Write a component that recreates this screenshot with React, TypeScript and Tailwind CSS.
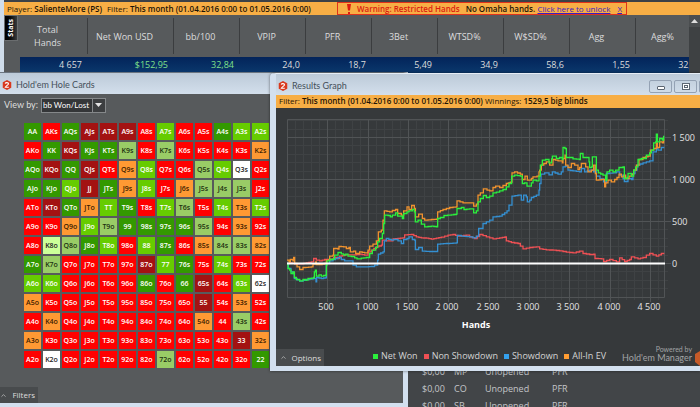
import { ChevronUp } from 'lucide-react'
import clsx from 'clsx'

const stats = [
  { label: 'Total Hands', value: '4 657', width: 'w-[68px]' },
  { label: 'Net Won USD', value: '$152,95', width: 'w-[86px]', positive: true },
  { label: 'bb/100', value: '32,84', width: 'w-[66px]', positive: true },
  { label: 'VPIP', value: '24,0', width: 'w-[66px]' },
  { label: 'PFR', value: '18,7', width: 'w-[66px]' },
  { label: '3Bet', value: '5,49', width: 'w-[66px]' },
  { label: 'WTSD%', value: '34,9', width: 'w-[66px]' },
  { label: 'W$SD%', value: '58,6', width: 'w-[66px]' },
  { label: 'Agg', value: '1,55', width: 'w-[66px]' },
  { label: 'Agg%', value: '32,1', width: 'w-[66px]' },
]

const ranks = 'AKQJT98765432'

// One letter per hand, see cellColors
const heat = [
  'GRGDDDRLRRGLL',
  'RGDGGPRPRRRRO',
  'GDGDROLRRPLWR',
  'GGLDGOLROPPPR',
  'RDGOLGRLPRLOL',
  'RROLPGGGGPROR',
  'RYPGLRLGROPPO',
  'GPRRRRDLGRLRR',
  'LLRRRRGRGDRLW',
  'ORRRRRRRRDROR',
  'RORRRRRRRORPR',
  'ORRRRRRRRRRDO',
  'RWRRRRRPRRRRG',
]

const cellColors: Record<string, string> = {
  R: 'bg-[#ff0000] text-white',
  G: 'bg-[#339900] text-white',
  L: 'bg-[#66cc00] text-white',
  P: 'bg-[#99cc66] text-[#1c3010]',
  O: 'bg-[#ff9933] text-[#3c2000]',
  D: 'bg-[#a31212] text-white',
  W: 'bg-white text-[#222]',
  Y: 'bg-[#ccff99] text-[#222]',
}

function handName(row: number, col: number) {
  if (row === col) return ranks[row] + ranks[row]
  return row < col ? `${ranks[row]}${ranks[col]}s` : `${ranks[col]}${ranks[row]}o`
}

// "x,v" pairs: x and v both count thirds of a pixel from the start of the zero line
const series = [
  {
    name: 'Non Showdown',
    color: '#ef5054',
    swatch: 'bg-[#ef5054]',
    data: '0,0 8,2 23,-1 43,-1 58,2 73,5 80,15 88,10 98,8 113,12 128,13 140,18 153,15 158,22 173,26 198,26 218,28 233,25 243,35 253,40 268,50 283,55 286,70 298,68 313,68 318,74 333,75 348,77 353,86 373,87 388,80 403,77 418,76 433,73 448,76 463,79 483,85 498,87 513,82 538,85 548,80 563,75 578,87 598,80 618,74 638,77 654,80 658,68 673,63 693,60 700,52 708,44 728,48 748,50 758,44 778,41 798,40 818,38 838,34 858,32 878,37 888,30 908,27 920,28 924,15 943,14 950,6 968,12 988,5 998,17 1013,6 1028,12 1033,20 1053,14 1068,18 1078,25 1088,30 1108,22 1123,30 1130,32',
  },
  {
    name: 'Showdown',
    color: '#3490d2',
    swatch: 'bg-[#34a0ec]',
    data: '0,0 4,-15 12,-25 18,-30 22,-45 38,-53 58,-48 78,-45 85,-45 87,-55 89,-42 103,-45 117,-42 118,0 128,8 138,12 153,18 163,12 173,8 188,8 198,-5 208,-10 238,-10 253,-9 263,-5 272,10 274,28 288,35 292,68 298,75 313,70 320,72 333,68 343,60 350,72 360,75 366,80 376,72 383,70 385,42 395,48 406,37 428,36 448,36 452,58 478,60 508,62 511,84 523,82 548,80 558,77 568,82 575,105 588,120 608,130 618,140 638,142 653,152 660,158 666,175 675,202 693,205 703,190 710,205 718,200 721,185 728,190 733,198 748,205 756,220 758,240 762,268 773,272 786,266 796,275 813,268 823,275 828,290 835,292 843,280 858,278 878,275 883,285 893,275 908,280 920,275 924,290 928,262 950,245 954,242 958,270 978,272 988,275 1008,255 1012,246 1023,255 1034,252 1038,270 1044,280 1050,295 1068,302 1088,308 1098,335 1108,345 1113,340 1123,348 1130,350',
  },
  {
    name: 'All-In EV',
    color: '#f0922e',
    swatch: 'bg-[#ff9c32]',
    data: '0,10 6,5 10,12 18,8 20,18 23,0 30,-10 38,-18 48,-12 73,-10 78,-2 86,5 88,-3 98,-3 113,0 118,10 128,22 138,25 140,45 153,43 156,51 170,50 178,45 186,48 190,35 200,37 206,30 218,35 233,32 243,40 248,52 258,58 268,68 274,95 283,100 288,130 292,158 308,155 316,159 326,162 332,150 343,145 350,158 360,170 366,162 374,174 382,165 385,140 395,148 406,135 413,130 433,132 448,133 452,155 468,162 488,168 508,170 510,188 528,182 548,182 560,172 568,178 573,205 580,212 589,224 600,220 608,218 618,228 626,232 638,228 648,234 658,240 664,242 670,244 675,272 683,275 700,268 706,252 714,262 721,250 733,255 738,260 750,262 756,275 758,280 763,295 778,305 788,295 798,312 813,308 826,302 828,315 834,325 836,295 843,288 853,300 863,295 873,282 878,288 883,300 896,290 903,275 913,280 920,295 925,270 928,250 943,252 953,230 956,242 963,250 973,245 983,252 990,258 996,268 1003,260 1010,265 1016,255 1026,262 1034,268 1040,280 1048,295 1056,312 1068,318 1083,322 1090,340 1100,345 1108,362 1111,348 1118,365 1126,362 1130,372',
  },
  {
    name: 'Net Won',
    color: '#2bf03c',
    swatch: 'bg-[#2bf03c]',
    data: '0,0 3,-15 8,-20 12,-30 18,-25 22,-42 28,-48 38,-52 48,-48 56,-50 63,-45 73,-44 80,-42 82,-25 85,-20 88,-38 96,-34 103,-38 110,-36 117,-34 118,-5 120,8 128,12 138,14 143,25 153,33 163,29 170,25 176,28 183,22 193,21 203,17 210,14 223,16 238,18 248,30 256,40 266,48 272,65 278,75 286,90 290,120 293,145 303,144 310,140 316,145 326,152 332,142 340,142 346,135 350,150 360,155 366,158 376,162 382,155 385,125 393,130 403,118 413,110 433,112 448,110 452,135 460,138 471,144 493,146 508,148 510,165 523,168 531,162 548,164 560,152 568,158 573,185 580,195 589,204 598,198 608,202 618,212 628,214 638,218 648,222 658,230 666,240 674,262 683,265 700,262 706,240 713,242 720,232 733,242 738,250 748,248 756,262 760,295 766,310 776,312 786,302 794,314 796,322 808,315 818,318 826,312 828,348 834,345 838,318 848,318 858,314 878,312 880,330 888,318 898,318 906,305 908,288 914,290 916,320 924,320 928,280 934,272 948,265 956,250 960,275 968,280 978,275 986,280 996,288 1008,290 1012,255 1020,258 1023,270 1033,262 1040,280 1046,290 1053,312 1063,315 1073,315 1078,325 1088,332 1093,340 1100,362 1106,365 1108,388 1111,365 1118,375 1126,370 1130,383',
  },
]

const legend = [series[3], series[0], series[1], series[2]]

// Plot area inside the 424 x 230 drawing
const plot = { left: 11, right: 389, top: 12, bottom: 189, zero: 155 }

// Stair line; long runs are cut into shorter steps so they do not turn into blocks
function stepPath(data: string) {
  const points = data.split(' ').map((pair) => pair.split(',').map(Number))
  let d = ''
  points.forEach(([px, pv], i) => {
    const [lastX, lastV] = points[Math.max(i - 1, 0)]
    const steps = Math.max(1, Math.round((px - lastX) / 9))
    for (let s = 1; s <= steps; s++) {
      const x = plot.left + (lastX + ((px - lastX) * s) / steps) / 3
      const y = plot.zero + 0.5 - (lastV + ((pv - lastV) * s) / steps) / 3
      d += d === '' ? `M${x} ${y}` : `H${x}V${y}`
    }
  })
  return d
}

function Logo() {
  return (
    <svg className="size-[10px] shrink-0" viewBox="0 0 20 20" aria-hidden="true">
      <path d="M10 0l8.5 4.5v11L10 20l-8.5-4.5v-11z" fill="#d9381e" />
      <path
        d="M6.5 7.2C7 4.6 13 4.4 13 7.600c0 2.400-4.500 3.600-6.200 6.800H13.600"
        fill="none"
        stroke="#fff"
        strokeWidth="2.200"
      />
    </svg>
  )
}

function TitleBar({ title, children }: { title: string; children?: React.ReactNode }) {
  return (
    <header className="flex h-[21px] items-center gap-1 bg-linear-to-b from-[#bccad8] to-[#d3dfec] pt-[3px] pl-[2px] font-['Lato','Open_Sans',sans-serif] text-[9px] text-[#45505a]">
      <Logo />
      <h2 className="grow">{title}</h2>
      {children}
    </header>
  )
}

function StatsWindow() {
  return (
    <section className="absolute inset-x-0 top-0 h-[73px] overflow-hidden border-l-4 border-[#cfdcea] bg-[#575a5c]">
      <div className="flex h-[15px] items-center border-t-2 border-[#3c4146] bg-[#f7ae45] pl-[3px] text-[8px] whitespace-nowrap text-[#1d1405]">
        <p className="w-[330px] shrink-0">
          Player: <b className="font-semibold">SalienteMore (PS)</b>
          <span className="ml-[5px]">Filter:</span>{' '}
          <b className="font-semibold">This month (01.04.2016 0:00 to 01.05.2016 0:00)</b>
        </p>
        <div className="flex h-[13px] w-[290px] shrink-0 items-center border border-[#e0321a] px-1 pl-[9px]">
          <svg className="mr-[6px] h-[10px] w-1" viewBox="0 0 4 10" aria-hidden="true">
            <path d="M0 0h4L3 6.500H1zM1 8h2v2H1z" fill="#dc1c10" />
          </svg>
          <b className="font-semibold text-[#dc1c10]">Warning: Restricted Hands</b>
          <b className="ml-[6px] font-semibold">No Omaha hands.</b>
          <a href="#unlock" className="ml-auto text-[#3a1cc4] underline">
            Click here to unlock
          </a>
          <a href="#close" className="ml-[7px] text-[#3a1cc4] underline">
            X
          </a>
        </div>
      </div>
      <div className="flex">
        <button className="mr-[2px] flex h-[26px] w-[14px] shrink-0 items-center justify-center border border-[#6a6d6f] bg-linear-to-r from-black to-[#3a3c3e] text-[7px] font-bold text-white">
          <span className="rotate-180 [writing-mode:vertical-rl]">Stats</span>
        </button>
        <div className="min-w-0 grow overflow-hidden">
          <table className="w-[682px] table-fixed border-collapse text-[9px] text-[#dcdcdc]">
            <thead>
              <tr>
                {stats.map((stat) => (
                  <th key={stat.label} className={clsx('h-[42px] p-0 font-normal', stat.width)}>
                    <div className="flex h-9 items-center justify-center border-r border-[#3b3d3f] pr-3 leading-[13px]">
                      <span className={clsx(stat.label === 'Total Hands' && 'w-7')}>{stat.label}</span>
                    </div>
                  </th>
                ))}
              </tr>
            </thead>
            <tbody>
              <tr className="h-[16px] bg-linear-to-b from-[#04245a] to-[#0b386c]">
                {stats.map((stat) => (
                  <td
                    key={stat.label}
                    className={clsx('p-0 pr-[6px] text-right leading-3', stat.positive && 'text-[#7fe08a]')}
                  >
                    {stat.value}
                  </td>
                ))}
              </tr>
            </tbody>
          </table>
        </div>
        <div className="w-[11px] shrink-0 bg-[#3e4143]">
          <button aria-label="Scroll up" className="flex h-3 w-full items-center justify-center bg-[#4b4e50]">
            <svg className="h-1 w-[7px]" viewBox="0 0 7 4">
              <path d="M3.500 0L7 4H0z" fill="#ddd" />
            </svg>
          </button>
        </div>
      </div>
    </section>
  )
}

function PositionsWindow() {
  return (
    <section className="absolute right-0 bottom-0 left-[408px] h-[37px] overflow-hidden bg-[#424548]">
      <table className="-mt-[7px] w-full border-collapse text-[9px] text-[#c4c6c8]">
        <tbody>
          {['MP', 'CO', 'SB'].map((position) => (
            <tr key={position} className="h-[17px]">
              <td className="w-[46px] p-0 pl-[14px]">$0,00</td>
              <td className="w-[31px] p-0">{position}</td>
              <td className="w-[67px] p-0">Unopened</td>
              <td className="p-0">PFR</td>
            </tr>
          ))}
        </tbody>
      </table>
    </section>
  )
}

function HoleCardsWindow() {
  return (
    <section className="absolute top-[72px] bottom-0 left-0 flex w-[408px] flex-col border-t border-r-[5px] border-b-4 border-t-[#6b7580] border-r-[#d3e0ef] border-b-[#d3e0ef] bg-[#575a5c]">
      <TitleBar title="Hold'em Hole Cards" />
      <div className="mb-[5px] flex h-[22px] items-center gap-[3px] pl-1 font-['Lato','Open_Sans',sans-serif] text-[9px] text-[#dedede]">
        <label htmlFor="view-by">View by:</label>
        <div className="relative">
          <select
            id="view-by"
            className="block h-[15px] w-[65px] appearance-none border border-[#85888a] bg-[#343638] pl-px text-[8px] leading-3 text-white"
          >
            <option>bb Won/Lost</option>
          </select>
          <span className="pointer-events-none absolute inset-y-px right-px flex w-[13px] items-center justify-center border-l border-[#85888a] bg-[#3c3e40]">
            <svg className="h-1 w-[7px]" viewBox="0 0 7 4">
              <path d="M0 0h7L3.500 4z" fill="#e4e4e4" />
            </svg>
          </span>
        </div>
      </div>
      <table className="ml-[22px] table-fixed border-separate border-spacing-[2px] self-start text-[7px] leading-none font-semibold">
        <tbody>
          {heat.map((line, row) => (
            <tr key={line + row}>
              {line.split('').map((code, col) => (
                <td
                  key={col}
                  className={clsx('h-[17px] w-[17px] max-w-[17px] p-0 text-center whitespace-nowrap', cellColors[code])}
                >
                  {handName(row, col)}
                </td>
              ))}
            </tr>
          ))}
        </tbody>
      </table>
      <button className="mt-auto flex h-4 w-[38px] items-center justify-between bg-[#484b4d] pr-[3px] text-[8px] text-[#dedede]">
        <ChevronUp size={7} />
        Filters
      </button>
    </section>
  )
}

function ResultsChart() {
  const xTicks = [500, 1000, 1500, 2000, 2500, 3000, 3500, 4000, 4500]
  const yTicks = [0, 500, 1000, 1500]
  const format = (n: number) => String(n).replace(/(\d)(\d{3})$/, '$1 $2')

  return (
    <svg className="h-[230px] w-[424px] shrink-0" viewBox="0 0 424 230" role="img" aria-label="Results graph">
      <g stroke="#3f4244">
        {Array.from({ length: 46 }, (_, i) => {
          const x = plot.left + Math.round((i + 1) * 8.07) + 0.5
          return <path key={i} d={`M${x} ${plot.top}V${plot.bottom + 3}`} />
        })}
        {Array.from({ length: 21 }, (_, i) => {
          const y = plot.zero + 0.5 - Math.round((i - 3) * 8.4)
          return <path key={i} d={`M${plot.left} ${y}H${plot.right + 3}`} />
        })}
      </g>
      <g stroke="#515456">
        {xTicks.map((tick) => {
          const x = plot.left + Math.round(tick * 0.0807) + 0.5
          return <path key={tick} d={`M${x} ${plot.top}V${plot.bottom + 5}`} />
        })}
        {yTicks.map((tick) => {
          const y = plot.zero + 0.5 - Math.round(tick * 0.084)
          return <path key={tick} d={`M${plot.left} ${y}H${plot.right + 6}`} />
        })}
        <path d={`M${plot.left + 0.5} ${plot.top - 0.5}H${plot.right - 0.5}V${plot.bottom + 0.5}H${plot.left + 0.5}z`} fill="none" />
      </g>
      {series.map((line) => (
        <path key={line.name} d={stepPath(line.data)} fill="none" stroke={line.color} strokeWidth="1.300" />
      ))}
      <path d={`M${plot.left} ${plot.zero + 0.5}H${plot.right}`} stroke="#fff" strokeWidth="2" />
      <g fill="#e4e4e4" fontSize="9">
        {xTicks.map((tick) => (
          <text key={tick} x={plot.left + Math.round(tick * 0.0807) - 1} y="202" textAnchor="middle">
            {format(tick)}
          </text>
        ))}
        {yTicks.map((tick) => (
          <text key={tick} x="396" y={plot.zero + 4 - Math.round(tick * 0.084)}>
            {format(tick)}
          </text>
        ))}
      </g>
      <text x="200" y="220" textAnchor="middle" fontSize="9" fontWeight="700" fill="#fff">
        Hands
      </text>
    </svg>
  )
}

function GraphWindow() {
  return (
    <section className="absolute top-[73px] right-0 left-[270px] h-[298px] overflow-hidden rounded-tl-[4px] border-t border-b-[5px] border-l-[6px] border-t-[#e6edf5] border-b-[#d3e0ef] border-l-[#d3e0ef] bg-[#36393b] shadow-[0_0_3px_#0008]">
      <TitleBar title="Results Graph">
        <div className="mr-[-9px] flex gap-[2px] self-end pb-[2px]">
          <button aria-label="Minimize" className="flex h-[13px] w-[23px] items-center justify-center rounded-xs border border-[#94a2b4]">
            <span className="mt-[2px] h-[4px] w-[8px] rounded-[1px] border border-[#5c6672] bg-white" />
          </button>
          <button aria-label="Maximize" className="flex h-[13px] w-[23px] items-center justify-center rounded-xs border border-[#94a2b4]">
            <span className="flex h-[7px] w-[8px] items-center justify-center border border-[#5c6672] bg-white">
              <span className="h-[3px] w-1 border border-[#5c6672]" />
            </span>
          </button>
          <button aria-label="Close" className="h-[13px] w-[10px] rounded-xs border border-[#94a2b4]" />
        </div>
      </TitleBar>
      <p className="h-[13px] bg-[#f7ae45] pl-[3px] text-[8px] leading-3 whitespace-nowrap text-[#1d1405]">
        Filter: <b className="font-semibold">This month (01.04.2016 0:00 to 01.05.2016 0:00)</b> Winnings:{' '}
        <b className="font-semibold">1529,5 big blinds</b>
      </p>
      <ResultsChart />
      <div className="flex h-7 items-end text-[9px]">
        <button className="flex h-[17px] w-12 items-center justify-between bg-[#494c4e] pr-[3px] pl-1 text-[8px] text-[#dedede]">
          <ChevronUp size={7} />
          Options
        </button>
        <ul className="ml-[49px] flex h-5 gap-[6px] whitespace-nowrap text-[#d4d4d4]">
          {legend.map((item) => (
            <li key={item.name} className="flex items-center gap-[3px]">
              <span className={clsx('size-[5px]', item.swatch)} />
              {item.name}
            </li>
          ))}
        </ul>
        <div className="ml-auto flex h-6 items-center gap-[3px] text-right font-['Lato','Open_Sans',sans-serif] whitespace-nowrap text-[#a2a4a6]">
          <div>
            <p className="text-[7px] leading-[8px]">Powered by</p>
            <p className="leading-[10px]">Hold'em Manager</p>
          </div>
          <svg className="mt-2 h-[15px] w-[5px]" viewBox="0 0 5 15" aria-hidden="true">
            <path d="M5 0L0 3v8l5 4z" fill="#c65a28" />
          </svg>
        </div>
      </div>
    </section>
  )
}

export default function App() {
  return (
    <main className="relative h-screen min-h-[407px] w-full overflow-hidden bg-[#424548] font-['Open_Sans','Noto_Sans',sans-serif]">
      <StatsWindow />
      <PositionsWindow />
      <HoleCardsWindow />
      <GraphWindow />
    </main>
  )
}
